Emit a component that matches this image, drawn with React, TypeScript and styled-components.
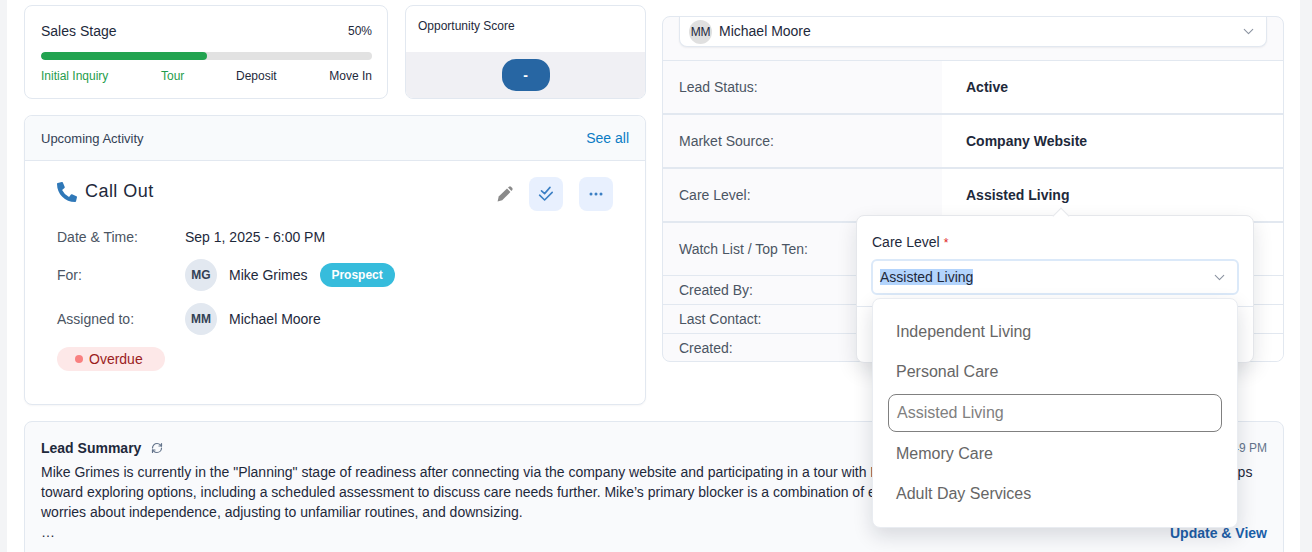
import React from "react";
import styled, { createGlobalStyle } from "styled-components";
import { FaPhoneAlt } from "react-icons/fa";
import { BsThreeDots } from "react-icons/bs";
import { LuRefreshCw, LuChevronDown } from "react-icons/lu";

const Global = createGlobalStyle`
  html, body { margin: 0; padding: 0; background: #f3f4f6; }
  body { font-family: "Liberation Sans", Arial, sans-serif; color: #1e293b; }
  * { box-sizing: border-box; }
`;

const Main = styled.main`
  margin-left: 7px;
  width: 1293px;
  height: 552px;
  overflow: hidden;
  background: #fff;
  padding: 5px 16px 0 17px;
  display: grid;
  grid-template-columns: 622px 622px;
  column-gap: 16px;
  grid-template-rows: 400px auto;
  row-gap: 16px;
`;
const LeftCol = styled.div`
  display: flex;
  flex-direction: column;
  gap: 16px;
`;
const TopRow = styled.div`
  display: flex;
  gap: 17px;
  height: 94px;
`;
const Card = styled.section`
  background: #fff;
  border: 1px solid #e2e8f0;
  border-radius: 8px;
`;
const SalesCard = styled(Card)`
  width: 364px;
  padding: 16px 15px 0 16px;
`;
const SalesHead = styled.div`
  display: flex;
  justify-content: space-between;
  align-items: center;
  font-size: 14px;
  height: 18px;
`;
const Percent = styled.span`
  font-size: 12px;
`;
const Track = styled.div`
  height: 8px;
  margin-top: 12px;
  border-radius: 4px;
  background: #e2e2e2;
  overflow: hidden;
`;
const Fill = styled.div`
  height: 100%;
  border-radius: 4px;
  background: #22a350;
`;
const Stages = styled.div`
  display: grid;
  grid-template-columns: 120px 75px 92px 1fr;
  margin-top: 9px;
  font-size: 12px;
  line-height: 14px;
`;
const Stage = styled.span<{ $done?: boolean; $align?: string }>`
  color: ${(p) => (p.$done ? "#1f9d4d" : "#1e293b")};
  text-align: ${(p) => p.$align || "left"};
`;
const ScoreCard = styled(Card)`
  width: 241px;
  display: flex;
  flex-direction: column;
  overflow: hidden;
`;
const ScoreHead = styled.div`
  height: 46px;
  padding: 12px 12px 0;
  font-size: 12px;
  line-height: 16px;
`;
const ScoreBody = styled.div`
  flex: 1;
  background: #f0f0f4;
  display: flex;
  justify-content: center;
  align-items: center;
`;
const ScorePill = styled.div`
  width: 48px;
  height: 32px;
  border-radius: 14px;
  background: #2766a3;
  color: #fff;
  font-size: 14px;
  font-weight: 700;
  display: flex;
  align-items: center;
  justify-content: center;
`;
const UpcomingCard = styled(Card)`
  height: 290px;
  box-shadow: 0 1px 2px rgba(15, 23, 42, 0.04);
`;
const UpcomingHead = styled.header`
  height: 45px;
  padding: 1px 16px 0;
  background: #f8fafc;
  border-bottom: 1px solid #e2e8f0;
  border-radius: 8px 8px 0 0;
  display: flex;
  justify-content: space-between;
  align-items: center;
  font-size: 13px;
  color: #334155;
`;
const SeeAll = styled.a`
  color: #0b7cc4;
  font-size: 14px;
  margin-top: -1px;
`;
const UpcomingBody = styled.div`
  padding: 16px 32px 0;
`;
const TitleRow = styled.div`
  display: flex;
  align-items: center;
  height: 34px;
`;
const PhoneIcon = styled(FaPhoneAlt)`
  color: #2f78b8;
  font-size: 20px;
  margin-right: 8px;
  margin-top: -4px;
`;
const ActivityTitle = styled.h2`
  margin: -6px 0 0;
  font-size: 18px;
  font-weight: 400;
  letter-spacing: 0.45px;
  color: #1e293b;
  flex: 1;
`;
const PencilSvg = styled.svg`
  color: #8a8a8a;
  width: 16px;
  height: 16px;
  margin-right: 16px;
`;
const IconButton = styled.button`
  width: 34px;
  height: 34px;
  border: 0;
  padding: 0;
  border-radius: 8px;
  background: #e8f0fe;
  color: #3b7fc4;
  display: flex;
  align-items: center;
  justify-content: center;
  & + & { margin-left: 16px; }
`;
const Row = styled.div<{ $h: number }>`
  display: grid;
  grid-template-columns: 128px 1fr;
  align-items: center;
  height: ${(p) => p.$h}px;
  font-size: 14px;
`;
const RowLabel = styled.span`
  color: #4b5563;
`;
const Person = styled.div`
  display: flex;
  align-items: center;
`;
const Avatar = styled.span`
  width: 32px;
  height: 32px;
  border-radius: 50%;
  background: #e2e8f0;
  color: #334155;
  font-size: 12px;
  font-weight: 700;
  display: flex;
  align-items: center;
  justify-content: center;
  margin-right: 12px;
`;
const Prospect = styled.span`
  margin-left: 12px;
  height: 24px;
  width: 75px;
  border-radius: 12px;
  background: #36bcdc;
  color: #fff;
  font-size: 12px;
  font-weight: 700;
  display: flex;
  align-items: center;
  justify-content: center;
`;
const Overdue = styled.span`
  margin-top: 6px;
  width: 108px;
  height: 24px;
  border-radius: 12px;
  background: #fde8e8;
  color: #9b1c1c;
  font-size: 14px;
  display: inline-flex;
  align-items: center;
  padding-left: 18px;
  gap: 6px;
  &::before {
    content: "";
    width: 8px;
    height: 8px;
    border-radius: 50%;
    background: #f98080;
  }
`;
const RightCol = styled.div`
  position: relative;
  padding-top: 11px;
`;
const InfoCard = styled(Card)`
  height: 346px;
  overflow: hidden;
  background: #fafafc;
`;
const OwnerBand = styled.div`
  height: 44px;
  padding: 0 16px;
  border-bottom: 1px solid #e2e8f0;
`;
const OwnerSelect = styled.div`
  height: 30px;
  background: #fff;
  border: 1px solid #e2e8f0;
  border-top: 0;
  border-radius: 0 0 8px 8px;
  box-shadow: 0 1px 2px rgba(15, 23, 42, 0.06);
  display: flex;
  align-items: center;
  padding: 0 9px 0 9px;
  font-size: 14px;
`;
const OwnerAvatar = styled.span`
  width: 23px;
  height: 24px;
  border-radius: 50%;
  background: #e0e0e0;
  font-size: 12px;
  letter-spacing: -0.3px;
  display: flex;
  align-items: center;
  justify-content: center;
  margin-right: 7px;
`;
const OwnerName = styled.span`
  flex: 1;
  margin-top: -2px;
`;
const Chevron = styled(LuChevronDown)`
  color: #8b93a1;
  font-size: 17px;
  stroke-width: 1.5;
`;
const InfoRow = styled.div<{ $h: number; $thick?: boolean }>`
  display: grid;
  grid-template-columns: 279px 1fr;
  height: ${(p) => p.$h}px;
  font-size: 14px;
  border-bottom: ${(p) => (p.$thick ? "2px" : "1px")} solid #e2e8f0;
  &:last-child { border-bottom: 0; }
`;
const InfoLabel = styled.div`
  display: flex;
  align-items: center;
  padding-left: 16px;
  color: #4b5563;
`;
const InfoValue = styled.div`
  background: #fff;
  display: flex;
  align-items: center;
  padding-left: 24px;
  font-weight: 700;
`;
const Popover = styled.div`
  position: absolute;
  left: 194px;
  top: 210px;
  width: 398px;
  height: 148px;
  background: #fff;
  border: 1px solid #e5e7eb;
  border-radius: 8px;
  box-shadow: 0 8px 20px rgba(15, 23, 42, 0.12);
  padding: 17px 14px 0 14px;
  &::before {
    content: "";
    position: absolute;
    left: 198px;
    top: -6px;
    width: 11px;
    height: 11px;
    background: #fff;
    border-left: 1px solid #e5e7eb;
    border-top: 1px solid #e5e7eb;
    transform: rotate(45deg);
  }
`;
const FieldLabel = styled.label`
  display: block;
  font-size: 14px;
  line-height: 18px;
  height: 26px;
  padding-left: 1px;
  color: #1e293b;
`;
const Required = styled.span`
  color: #e02424;
  font-size: 12px;
  margin-left: 4px;
`;
const FieldSelect = styled.div`
  height: 36px;
  width: 368px;
  border: 2px solid #dbe9f9;
  border-radius: 6px;
  display: flex;
  align-items: center;
  padding: 0 9px 0 7px;
  font-size: 14px;
  background: #fff;
`;
const Selected = styled.span`
  flex: 1;
  & > span {
    background: #b3d4fc;
    display: inline-block;
    line-height: 16px;
    color: #1e293b;
  }
`;
const FooterRule = styled.div`
  margin: 11px -14px 0 -14px;
  border-top: 1px solid #e2e8f0;
`;
const Dropdown = styled.ul`
  position: absolute;
  left: 15px;
  top: 82px;
  width: 366px;
  height: 230px;
  margin: 0;
  padding: 13px 15px 0;
  list-style: none;
  background: #fff;
  border: 1px solid #e9ecf1;
  border-radius: 8px;
  box-shadow: 0 8px 20px rgba(15, 23, 42, 0.14);
  z-index: 2;
`;
const Option = styled.li<{ $active?: boolean }>`
  font-size: 16px;
  color: ${(p) => (p.$active ? "#808080" : "#666")};
  height: ${(p) => (p.$active ? "38px" : "40px")};
  display: flex;
  align-items: center;
  padding-left: 8px;
  border: ${(p) => (p.$active ? "1px solid #808080" : "0")};
  border-radius: 8px;
  margin: ${(p) => (p.$active ? "2px 0 2px" : "0")};
`;
const Summary = styled.section`
  grid-column: 1 / 3;
  height: 180px;
  background: #f9fafc;
  border: 1px solid #e2e8f0;
  border-radius: 8px;
  padding: 16px;
`;
const SummaryHead = styled.div`
  display: flex;
  align-items: center;
  height: 20px;
`;
const SummaryTitle = styled.h3`
  margin: 0;
  font-size: 14px;
  font-weight: 700;
  color: #1e293b;
`;
const Refresh = styled(LuRefreshCw)`
  color: #64748b;
  font-size: 12px;
  margin-left: 10px;
  stroke-width: 2.4;
`;
const Stamp = styled.span`
  margin-left: auto;
  color: #64748b;
  font-size: 12px;
`;
const SummaryLine = styled.p`
  margin: 0;
  font-size: 14px;
  line-height: 20px;
  white-space: nowrap;
  color: #1e293b;
`;
const SummaryText = styled.div`
  margin-top: 4px;
`;
const UpdateRow = styled.div`
  display: flex;
  justify-content: flex-end;
  margin-top: -17px;
`;
const UpdateLink = styled.a`
  color: #1c5fa8;
  font-size: 14px;
  font-weight: 700;
`;

const ChecksIcon = () => (
  <svg width="16" height="16" viewBox="0 0 16 16" fill="none" stroke="currentColor" strokeWidth="1.6" strokeLinecap="round" strokeLinejoin="round">
    <path d="M3.5 4.8 L6.6 7.6 L12 1.4" />
    <path d="M1.6 9.2 L6.6 14 L14.2 6.4" />
  </svg>
);

const PencilIcon = () => (
  <PencilSvg viewBox="0 0 16 16" fill="currentColor" aria-hidden="true">
    <path d="M0.6 15.4 L1.7 10.6 L10 2.6 L13.4 6 L5.2 14.2 Z" />
    <path d="M11 1.6 L12 0.7 Q13 0 14 0.7 L15.3 2 Q16 3 15.3 4 L14.4 5 Z" />
  </PencilSvg>
);

export default function App() {
  return (
    <>
      <Global />
      <Main>
        <LeftCol>
          <TopRow>
            <SalesCard>
              <SalesHead>
                <span>Sales Stage</span>
                <Percent>50%</Percent>
              </SalesHead>
              <Track>
                <Fill style={{ width: "50%" }} />
              </Track>
              <Stages>
                <Stage $done>Initial Inquiry</Stage>
                <Stage $done>Tour</Stage>
                <Stage>Deposit</Stage>
                <Stage $align="right">Move In</Stage>
              </Stages>
            </SalesCard>
            <ScoreCard>
              <ScoreHead>Opportunity Score</ScoreHead>
              <ScoreBody>
                <ScorePill>-</ScorePill>
              </ScoreBody>
            </ScoreCard>
          </TopRow>
          <UpcomingCard>
            <UpcomingHead>
              <span>Upcoming Activity</span>
              <SeeAll>See all</SeeAll>
            </UpcomingHead>
            <UpcomingBody>
              <TitleRow>
                <PhoneIcon />
                <ActivityTitle>Call Out</ActivityTitle>
                <PencilIcon />
                <IconButton aria-label="Complete">
                  <ChecksIcon />
                </IconButton>
                <IconButton aria-label="More">
                  <BsThreeDots size={16} />
                </IconButton>
              </TitleRow>
              <Row $h={38} style={{ marginTop: 7 }}>
                <RowLabel>Date &amp; Time:</RowLabel>
                <span>Sep 1, 2025 - 6:00 PM</span>
              </Row>
              <Row $h={38}>
                <RowLabel>For:</RowLabel>
                <Person>
                  <Avatar>MG</Avatar>
                  <span>Mike Grimes</span>
                  <Prospect>Prospect</Prospect>
                </Person>
              </Row>
              <Row $h={44} style={{ marginTop: 3 }}>
                <RowLabel>Assigned to:</RowLabel>
                <Person>
                  <Avatar>MM</Avatar>
                  <span>Michael Moore</span>
                </Person>
              </Row>
              <Overdue>Overdue</Overdue>
            </UpcomingBody>
          </UpcomingCard>
        </LeftCol>
        <RightCol>
          <InfoCard>
            <OwnerBand>
              <OwnerSelect>
                <OwnerAvatar>MM</OwnerAvatar>
                <OwnerName>Michael Moore</OwnerName>
                <Chevron />
              </OwnerSelect>
            </OwnerBand>
            <InfoRow $h={54} $thick>
              <InfoLabel>Lead Status:</InfoLabel>
              <InfoValue>Active</InfoValue>
            </InfoRow>
            <InfoRow $h={54} $thick>
              <InfoLabel>Market Source:</InfoLabel>
              <InfoValue>Company Website</InfoValue>
            </InfoRow>
            <InfoRow $h={54} $thick>
              <InfoLabel>Care Level:</InfoLabel>
              <InfoValue>Assisted Living</InfoValue>
            </InfoRow>
            <InfoRow $h={53}>
              <InfoLabel>Watch List / Top Ten:</InfoLabel>
              <InfoValue />
            </InfoRow>
            <InfoRow $h={29}>
              <InfoLabel>Created By:</InfoLabel>
              <InfoValue />
            </InfoRow>
            <InfoRow $h={29}>
              <InfoLabel>Last Contact:</InfoLabel>
              <InfoValue />
            </InfoRow>
            <InfoRow $h={28}>
              <InfoLabel>Created:</InfoLabel>
              <InfoValue />
            </InfoRow>
          </InfoCard>
          <Popover>
            <FieldLabel>
              Care Level<Required>*</Required>
            </FieldLabel>
            <FieldSelect>
              <Selected>
                <span>Assisted Living</span>
              </Selected>
              <Chevron />
            </FieldSelect>
            <FooterRule />
            <Dropdown>
              <Option>Independent Living</Option>
              <Option>Personal Care</Option>
              <Option $active>Assisted Living</Option>
              <Option>Memory Care</Option>
              <Option>Adult Day Services</Option>
            </Dropdown>
          </Popover>
        </RightCol>
        <Summary>
          <SummaryHead>
            <SummaryTitle>Lead Summary</SummaryTitle>
            <Refresh />
            <Stamp>Aug 28, 2025 3:49 PM</Stamp>
          </SummaryHead>
          <SummaryText>
            <SummaryLine>
              Mike Grimes is currently in the "Planning" stage of readiness after connecting via the company website and participating in a tour with Michael Moore. He and his family have taken some firm steps
            </SummaryLine>
            <SummaryLine>
              toward exploring options, including a scheduled assessment to discuss care needs further. Mike’s primary blocker is a combination of emotions
            </SummaryLine>
            <SummaryLine>worries about independence, adjusting to unfamiliar routines, and downsizing.</SummaryLine>
            <SummaryLine>…</SummaryLine>
          </SummaryText>
          <UpdateRow>
            <UpdateLink>Update &amp; View</UpdateLink>
          </UpdateRow>
        </Summary>
      </Main>
    </>
  );
}
